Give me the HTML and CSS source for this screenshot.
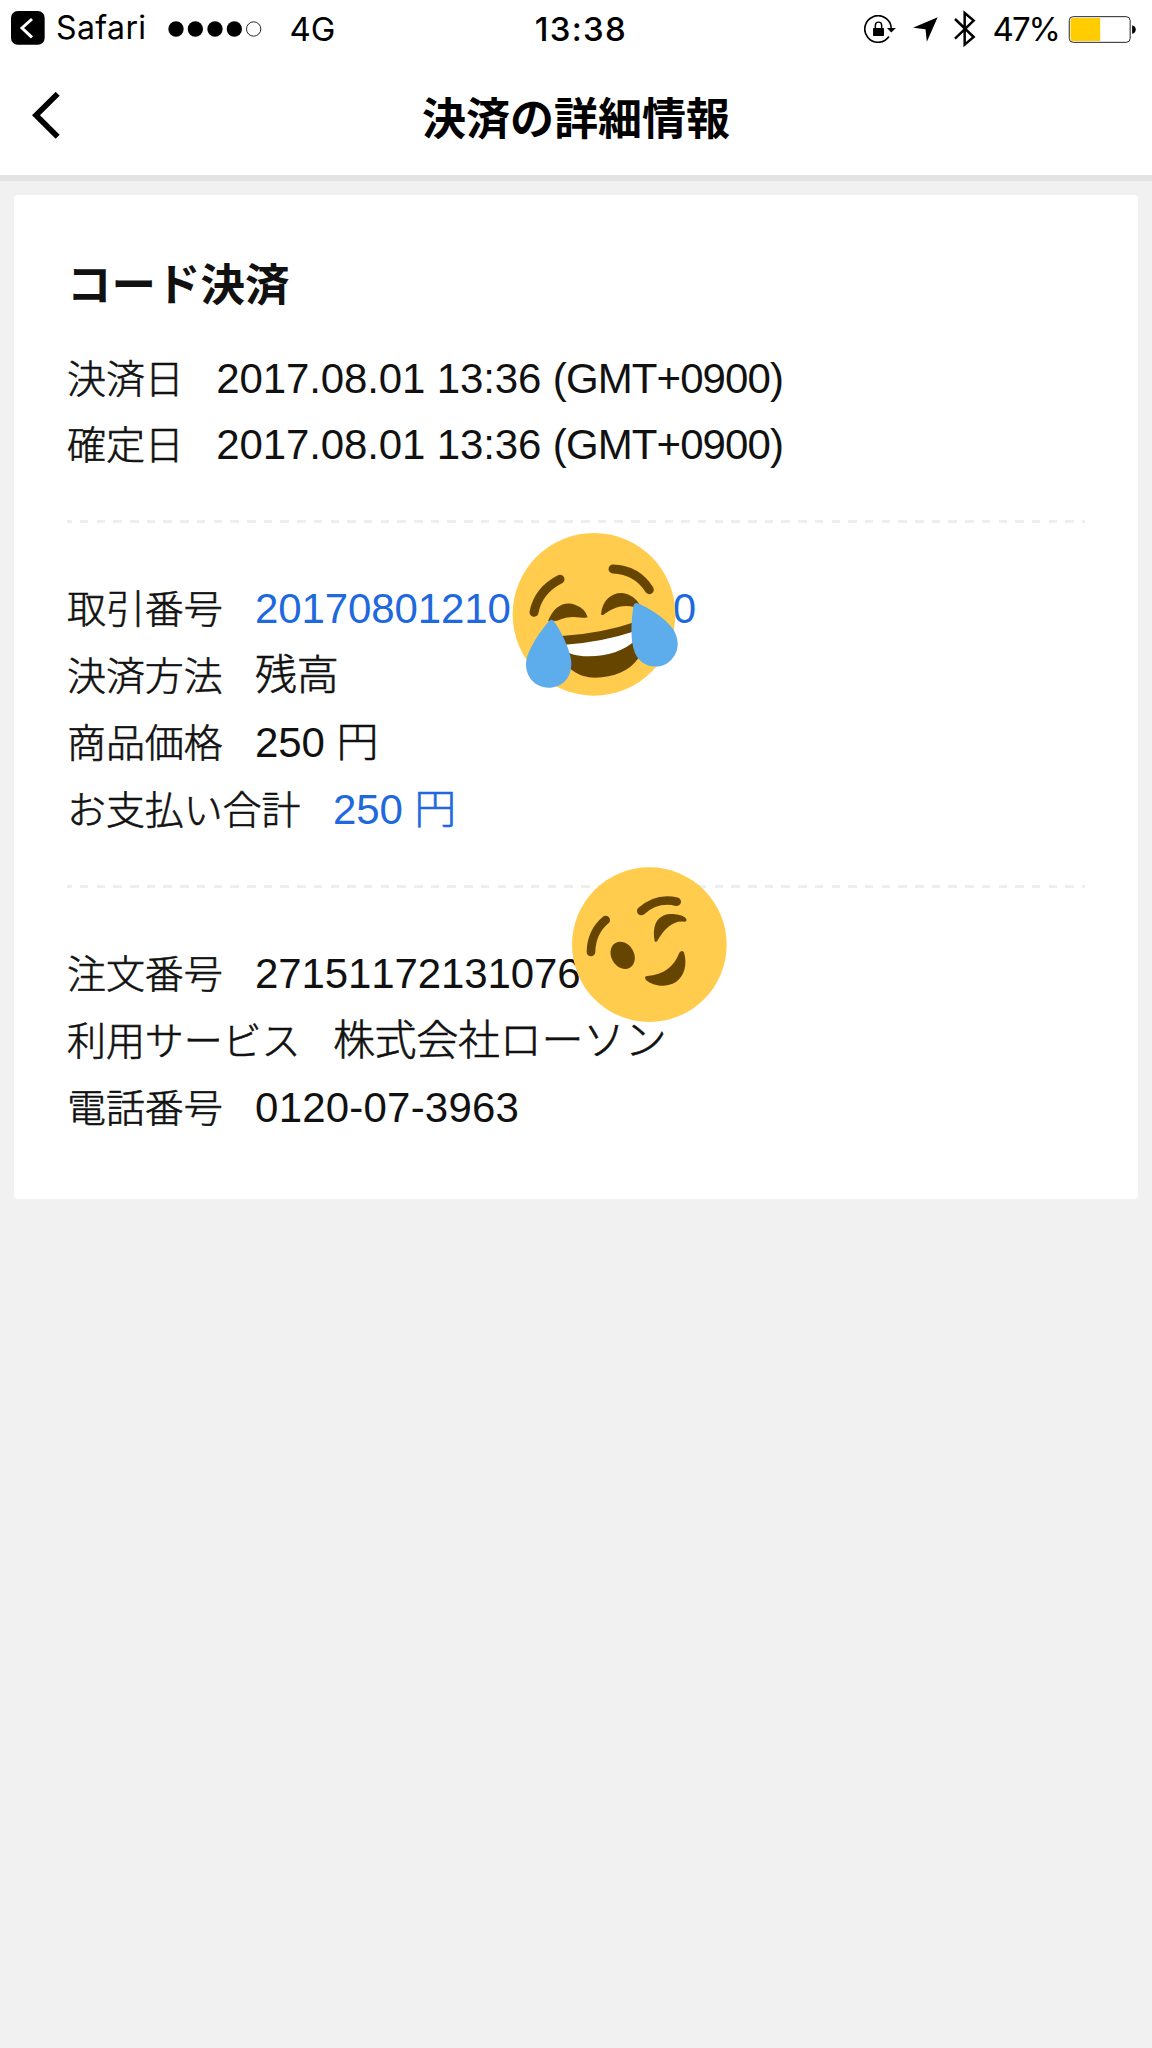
FILE: index.html
```html
<!DOCTYPE html>
<html lang="ja">
<head>
<meta charset="utf-8">
<title>決済の詳細情報</title>
<link rel="stylesheet" href="styles.css">
</head>
<body>
<header class="header">
  <div class="status">
    <div class="status-left">
      <svg class="back-app" viewBox="0 0 102 102"><rect width="101" height="101" rx="20"/><path d="M63 24 33 51 63 79" fill="none" stroke="#fff" stroke-width="9"/></svg>
      <span class="app-name">Safari</span>
      <svg class="signal" viewBox="0 0 282 48"><circle cx="24" cy="24" r="23"/><circle cx="82" cy="24" r="23"/><circle cx="141" cy="24" r="23"/><circle cx="199" cy="24" r="23"/><circle cx="257" cy="24" r="21.5" fill="none" stroke="#000" stroke-width="2.5"/></svg>
      <span class="network">4G</span>
    </div>
    <span class="clock">13:38</span>
    <div class="status-right">
      <svg class="lock" viewBox="0 0 96 86"><path d="M75 65A40 40 0 1 1 82 39" fill="none" stroke="#000" stroke-width="5"/><path d="M69 39h27L82 53z"/><rect x="27" y="39" width="33" height="24" rx="2"/><path d="M34 40V31a9.500 9.500 0 0 1 19 0v9" fill="none" stroke="#000" stroke-width="4.500"/></svg>
      <svg class="location" viewBox="0 0 74 74"><path d="M73 1 41 73 37 36 0 32z"/></svg>
      <svg class="bluetooth" viewBox="0 0 66 114"><path d="M3 27 59 81 32 104V9L59 32 3 86" fill="none" stroke="#000" stroke-width="7.500"/></svg>
      <span class="percent">47%</span>
      <svg class="battery" viewBox="0 0 206 82"><rect x="2" y="2" width="185" height="78" rx="12" fill="#fff" stroke="#222" stroke-width="3"/><path d="M96 6H12q-6 0-6 6v58q0 6 6 6h84z" fill="#fc0"/><path d="M193 28q11 3 11 13t-11 13z"/></svg>
    </div>
  </div>
  <div class="navbar">
    <svg class="back" viewBox="0 0 84 140"><path d="M77 5 12 69 77 134" fill="none" stroke="#000" stroke-width="17"/></svg>
    <h1 class="title">決済の詳細情報</h1>
  </div>
</header>
<main class="card">
  <h2 class="heading">コード決済</h2>
  <section class="group">
    <div class="row"><span class="label">決済日</span><span class="value">2017.08.01 13:36 <span class="zone">(GMT+0900)</span></span></div>
    <div class="row"><span class="label">確定日</span><span class="value">2017.08.01 13:36 <span class="zone">(GMT+0900)</span></span></div>
  </section>
  <section class="group">
    <div class="row"><span class="label">取引番号</span><span class="value link">20170801210<span class="covered"></span>0</span></div>
    <div class="row"><span class="label">決済方法</span><span class="value jp">残高</span></div>
    <div class="row"><span class="label">商品価格</span><span class="value">250 <span class="jp">円</span></span></div>
    <div class="row"><span class="label">お支払い合計</span><span class="value link">250 <span class="jp">円</span></span></div>
  </section>
  <section class="group">
    <div class="row"><span class="label">注文番号</span><span class="value">27151172131076</span></div>
    <div class="row"><span class="label">利用サービス</span><span class="value jp">株式会社ローソン</span></div>
    <div class="row"><span class="label">電話番号</span><span class="value phone">0120-07-3963</span></div>
  </section>
</main>
<svg class="sticker joy" viewBox="0 0 660 630">
  <circle cx="312" cy="313" r="244" fill="#ffcc4d"/>
  <g fill="none" stroke="#664500" stroke-width="27" stroke-linecap="round"><path d="M132 307Q145 241 210 208"/><path d="M369 177Q440 179 478 239"/></g>
  <g fill="#664500"><path d="M174 334C191 288 224 273 255 284Q286 295 293 322C278 328 248 310 201 332Z"/><path d="M333 313C337 270 365 247 398 249Q430 254 449 283L433 291C390 280 360 300 341 314Q335 316 333 313Z"/>
  <path d="M215 378Q335 371 445 333V445C420 482 372 503 315 503 265 503 225 475 215 430Z"/></g>
  <path d="M225 404Q335 397 436 363V390C393 436 292 452 235 428Z" fill="#fff"/>
  <g fill="#5dadec"><path d="M180 331Q185 327 191 333C212 361 244 425 244 461 244 506 214 533 175 533 136 533 108 502 108 463 108 425 151 362 180 331Z"/><path d="M431 285Q434 278 441 279C477 293 526 325 549 357 575 399 563 439 530 461 493 481 450 465 435 429 419 391 424 325 431 285Z"/></g>
</svg>
<svg class="sticker wink" viewBox="0 0 600 570">
  <circle cx="298" cy="284" r="232" fill="#ffcc4d"/>
  <g fill="none" stroke="#664500" stroke-width="26" stroke-linecap="round"><path d="M123 306Q124 246 167 210"/><path d="M274 183Q321 141 380 155"/></g>
  <ellipse cx="218" cy="316" rx="34" ry="43" transform="rotate(-30 218 316)" fill="#664500"/>
  <g fill="#664500"><path d="M314 273C304 213 332 190 370 192Q403 195 409 207 411 216 402 215C369 211 342 237 323 271Q318 280 314 273Z"/><path d="M388 308Q395 299 402 307C413 347 402 379 378 396 346 415 309 408 288 390Q281 380 291 378C342 374 373 349 388 308Z"/></g>
</svg>
</body>
</html>
```
FILE: styles.css
```css
body {
  position: relative;
  margin: 0;
  min-height: 2048px;
  background: #f1f1f1;
  color: #111;
  font-family: "Liberation Sans", "Noto Sans CJK JP", sans-serif;
  font-kerning: none;
}
svg { display: block; flex: none; }
.header {
  box-sizing: border-box;
  height: 181px;
  border-bottom: 6px solid #e3e3e3;
  background: #fff;
  color: #000;
}
.status {
  display: grid;
  grid-template-columns: 1fr auto 1fr;
  align-items: center;
  height: 57px;
  padding: 0 15px 0 11px;
  font: 33px/57px Inter, sans-serif;
}
.status-left, .status-right { display: flex; align-items: center; }
.status-right { justify-content: flex-end; }
.back-app { width: 34px; height: 34px; margin-bottom: 3px; }
.app-name { margin: -3px 0 0 11px; font-size: 32px; letter-spacing: 0.4px; }
.signal { width: 94px; height: 16px; margin-left: 21px; }
.network { margin: 1px 0 0 28px; }
.clock { margin-top: 1px; font-weight: 500; letter-spacing: 1.300px; padding-left: 14px; }
.lock { width: 32px; height: 28.5px; }
.location { width: 25px; height: 25px; margin-left: 17px; }
.bluetooth { width: 22px; height: 38px; margin-left: 16px; }
.percent { margin: 1px 0 0 17px; letter-spacing: -2px; }
.battery { width: 69px; height: 27px; margin-left: 9px; }
.navbar {
  display: grid;
  grid-template-columns: 60px 1fr 60px;
  align-items: center;
  height: 118px;
  padding: 0 32px;
}
.back { width: 28px; height: 47px; margin-bottom: 2px; }
.title {
  margin: 0;
  text-align: center;
  font: 700 44px/60px "Noto Sans CJK JP", sans-serif;
}
.card {
  box-sizing: border-box;
  height: 1004px;
  margin: 14px 14px 0;
  padding: 55px 53px 0;
  border-radius: 4px;
  background: #fff;
}
.heading {
  margin: 0 0 31.500px;
  font: 700 44.500px/64px "Noto Sans CJK JP", sans-serif;
}
.group + .group {
  margin-top: 41px;
  padding-top: 56px;
  background: repeating-linear-gradient(90deg, #eee 0 4.800px, transparent 4.800px 13px, #eee 13px 16.700px) 0 0 / 100% 3px no-repeat;
}
.row {
  display: flex;
  align-items: baseline;
  gap: 32.500px;
  height: 66.900px;
  line-height: 66.900px;
  white-space: nowrap;
}
.label { font-size: 39px; letter-spacing: -0.100px; }
.label, .jp { font-weight: 300; -webkit-text-stroke: 0.6px currentColor; }
.value { font-size: 42px; letter-spacing: -0.120px; }
.value.jp { letter-spacing: -0.300px; }
.value.phone { letter-spacing: 0.200px; }
.zone { letter-spacing: -0.900px; }
.link { color: #2068de; }
.covered { display: inline-block; width: 162px; }
.sticker { position: absolute; }
.joy { left: 490px; top: 510px; width: 220px; height: 210px; }
.wink { left: 550px; top: 850px; width: 200px; height: 190px; }
```
